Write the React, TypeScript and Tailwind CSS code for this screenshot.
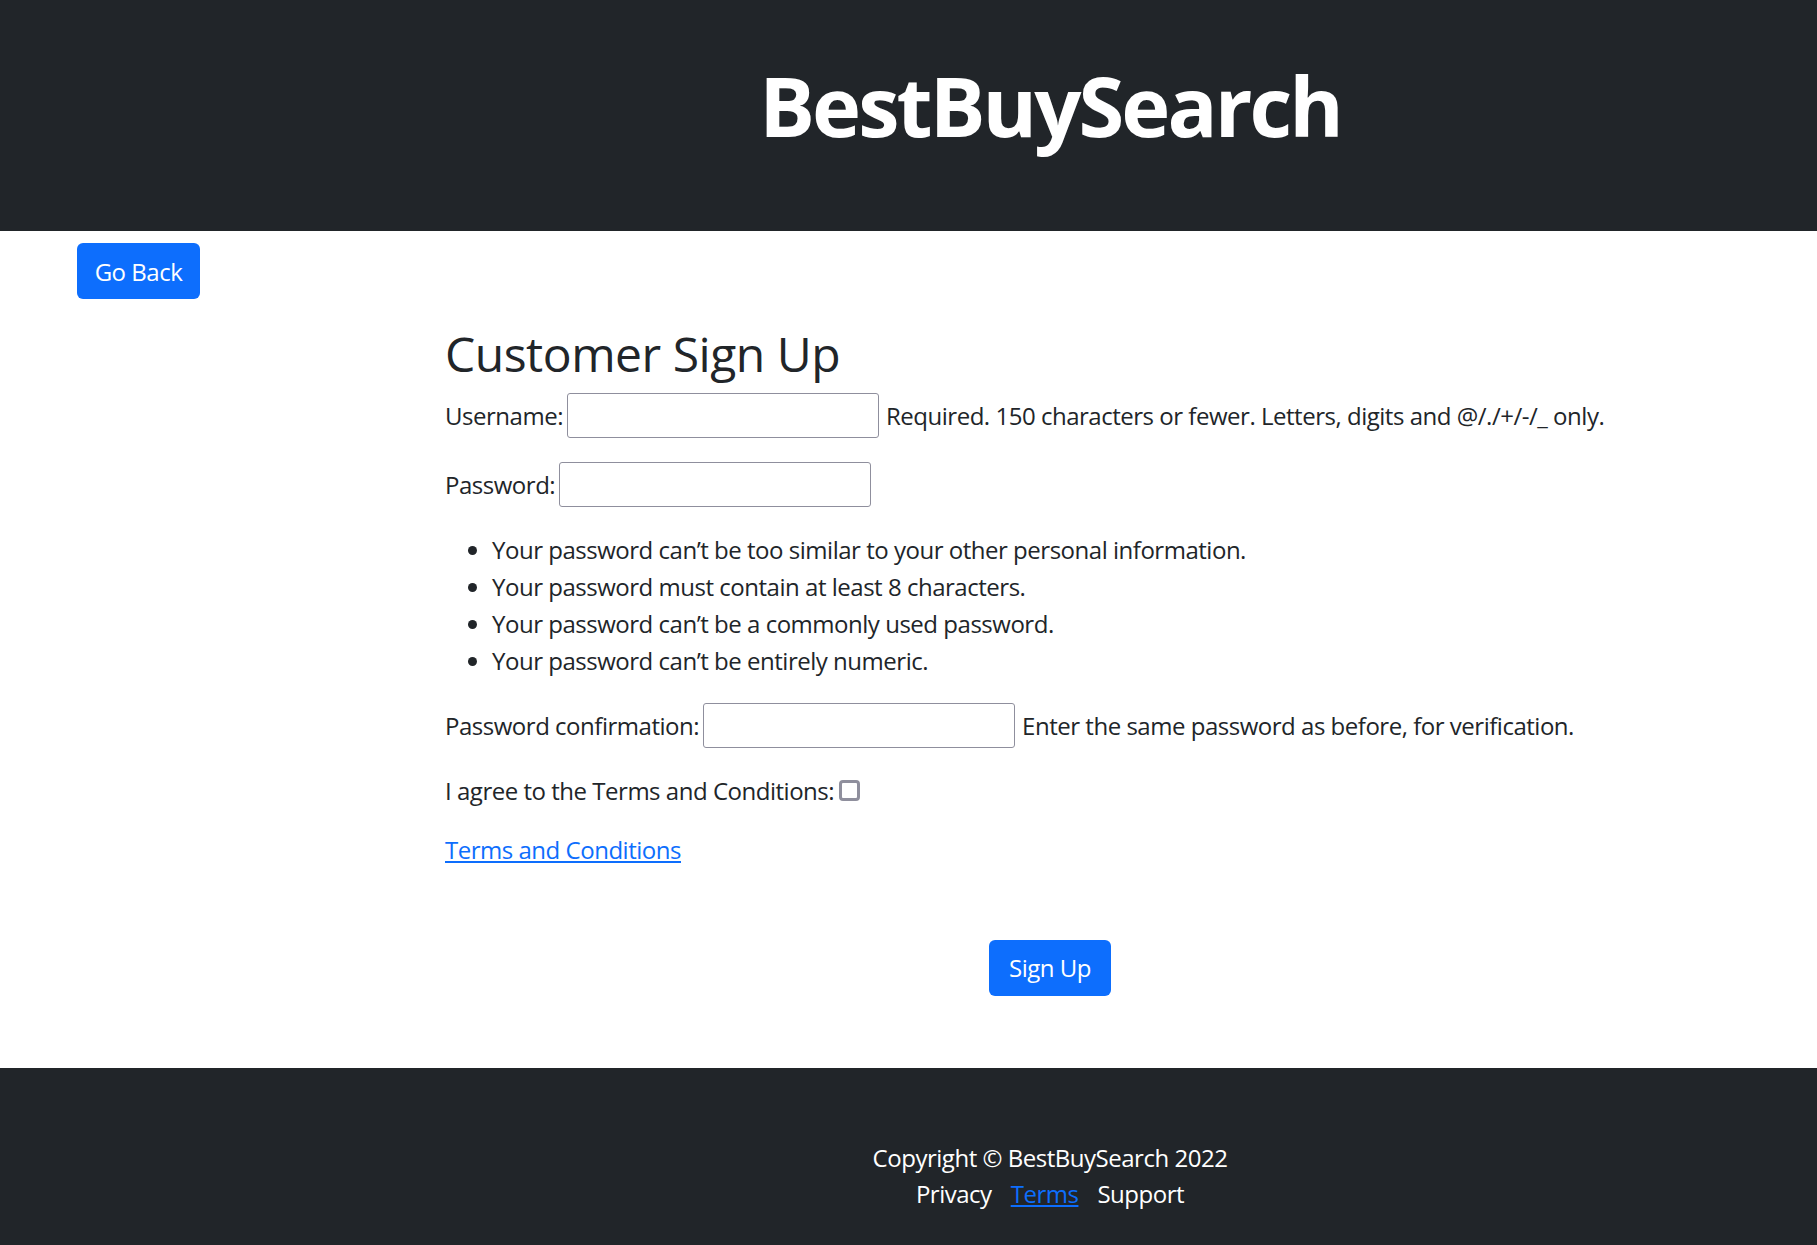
import { useState } from 'react'

const passwordRules = [
  'Your password can’t be too similar to your other personal information.',
  'Your password must contain at least 8 characters.',
  'Your password can’t be a commonly used password.',
  'Your password can’t be entirely numeric.',
]

export default function App() {
  const [username, setUsername] = useState('')
  const [password, setPassword] = useState('')
  const [confirm, setConfirm] = useState('')
  const [agree, setAgree] = useState(false)

  const inputClass =
    'w-[312px] h-[45px] shrink-0 border border-[#8f8f9d] rounded-[3px] px-2 text-[24px] outline-none bg-white'

  return (
    <div className="min-h-screen flex flex-col bg-white text-[#212529] font-['Open_Sans',sans-serif] text-[24px] leading-[37px] tracking-[-0.02em]">
      {/* Header */}
      <header className="h-[231px] bg-[#212529] pt-[55px]">
        <div className="ml-[445px] w-[1210px] text-center">
          <h1 className="text-[83px] leading-[1.2] font-bold text-white tracking-[-0.035em]">BestBuySearch</h1>
        </div>
      </header>

      {/* Main */}
      <main className="flex-1 pb-[72px]">
        <div className="pl-[77px] pt-[12px]">
          <button className="h-[56px] w-[123px] rounded-[6px] bg-[#0d6efd] text-white text-[24px]">
            Go Back
          </button>
        </div>

        <div className="ml-[445px] w-[1210px]">
          <h2 className="mt-[26px] mb-[10px] text-[48px] leading-[1.2] font-normal">Customer Sign Up</h2>

          <form onSubmit={(e) => e.preventDefault()}>
            <p className="flex items-center gap-[7px]">
              <label htmlFor="id_username" className="-mr-[3px]">Username:</label>
              <input
                id="id_username"
                className={inputClass}
                value={username}
                onChange={(e) => setUsername(e.target.value)}
              />
              <span>Required. 150 characters or fewer. Letters, digits and @/./+/-/_ only.</span>
            </p>

            <p className="mt-[24px] flex items-center gap-[7px]">
              <label htmlFor="id_password1" className="-mr-[3px]">Password:</label>
              <input
                id="id_password1"
                type="password"
                className={inputClass}
                value={password}
                onChange={(e) => setPassword(e.target.value)}
              />
            </p>

            <ul className="mt-[24px] pl-[47px] list-disc">
              {passwordRules.map((rule) => (
                <li key={rule}>{rule}</li>
              ))}
            </ul>

            <p className="mt-[24px] flex items-center gap-[7px]">
              <label htmlFor="id_password2" className="-mr-[3px]">Password confirmation:</label>
              <input
                id="id_password2"
                type="password"
                className={inputClass}
                value={confirm}
                onChange={(e) => setConfirm(e.target.value)}
              />
              <span>Enter the same password as before, for verification.</span>
            </p>

            <p className="mt-[24px] flex items-center gap-[5px]">
              <label htmlFor="id_terms">I agree to the Terms and Conditions:</label>
              <input
                id="id_terms"
                type="checkbox"
                checked={agree}
                onChange={(e) => setAgree(e.target.checked)}
                className="appearance-none box-border shrink-0 w-[21px] h-[21px] border-[3px] border-[#8f8f9d] rounded-[4px] bg-white checked:bg-[#0d6efd] checked:border-[#0d6efd]"
              />
            </p>

            <p className="mt-[22px]">
              <a href="#" className="text-[#0d6efd] underline">Terms and Conditions</a>
            </p>

            <div className="mt-[72px] flex justify-center">
              <button type="submit" className="h-[56px] w-[122px] rounded-[6px] bg-[#0d6efd] text-white text-[24px]">
                Sign Up
              </button>
            </div>
          </form>
        </div>
      </main>

      {/* Footer */}
      <footer className="bg-[#212529] text-white pt-[72px] pb-[34px] leading-[36px]">
        <div className="ml-[445px] w-[1210px] text-center">
          <p>Copyright © BestBuySearch 2022</p>
          <div className="flex justify-center gap-[19px]">
            <a href="#">Privacy</a>
            <a href="#" className="text-[#0d6efd] underline">Terms</a>
            <a href="#">Support</a>
          </div>
        </div>
      </footer>
    </div>
  )
}
